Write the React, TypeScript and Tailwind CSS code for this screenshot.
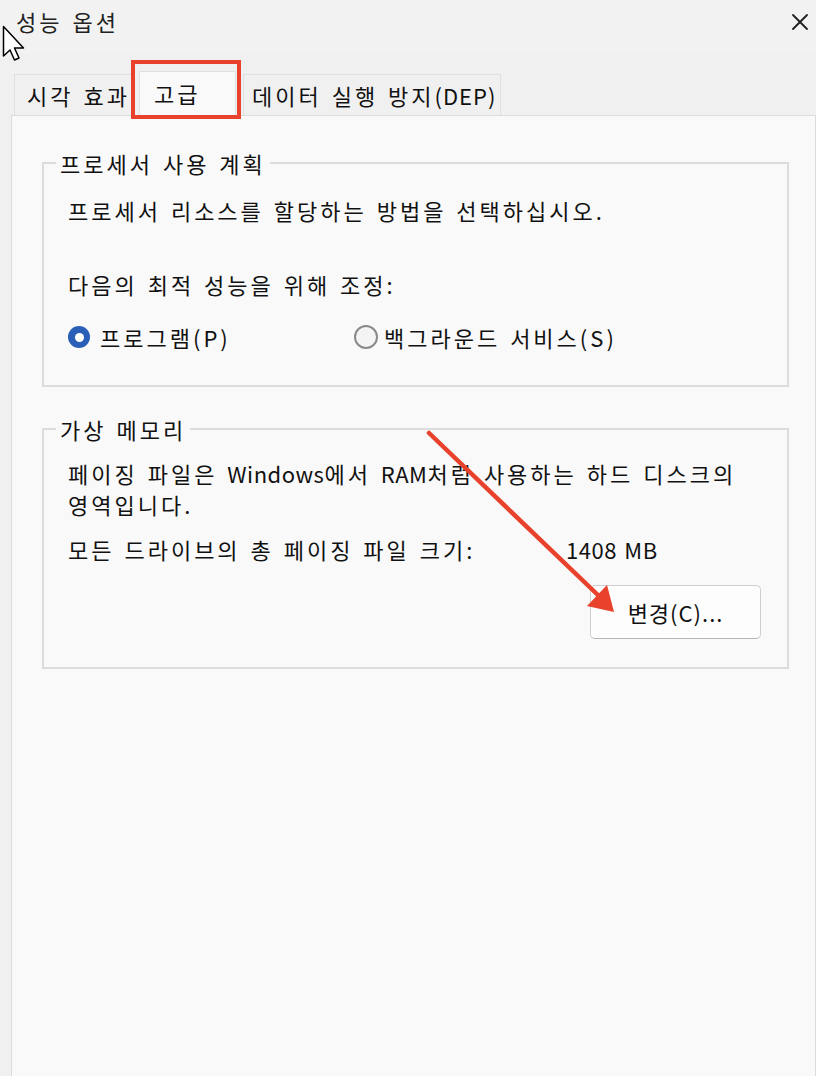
import { X } from 'lucide-react';

const font = { fontFamily: '"Noto Sans CJK KR", "Noto Sans", sans-serif' };

function Radio({ checked }: { checked?: boolean }) {
  if (checked) {
    return (
      <span className="w-[22px] h-[22px] rounded-full bg-[#2a5fb8] flex items-center justify-center shrink-0">
        <span className="w-[9px] h-[9px] rounded-full bg-white" />
      </span>
    );
  }
  return <span className="w-[24px] h-[24px] rounded-full border-2 border-[#8a8a8a] bg-[#f4f4f4] shrink-0" />;
}

function GroupBox({ title, className, children }: { title: string; className?: string; children: React.ReactNode }) {
  return (
    <fieldset className={`border-2 border-[#dcdcdc] px-[24px] ${className ?? ''}`}>
      <legend className="px-[4px] ml-[-12px] leading-[28px]">{title}</legend>
      {children}
    </fieldset>
  );
}

export default function App() {
  return (
    <div
      className="relative w-[816px] h-[1076px] overflow-hidden bg-[#f0f0f0] text-[#111] text-[22px] tracking-[3px] [word-spacing:2px]"
      style={font}
    >
      {/* Title bar */}
      <div className="h-[54px] flex items-start justify-between bg-[#f2f2f2] pl-[16px] pr-[2px]">
        <span className="leading-[24px] mt-[9px] text-[#222]">성능 옵션</span>
        <X size={28} strokeWidth={1.6} className="mt-[8px] text-[#222]" />
      </div>

      {/* Tabs */}
      <div className="flex items-end h-[61px] pl-[14px]">
        <div className="h-[41px] w-[120px] pl-[12px] border border-b-0 border-[#e0e0e0] bg-[#f0f0f0] flex items-center whitespace-nowrap">
          시각 효과
        </div>
        <div className="relative h-[44px] w-[97px] ml-[5px] border border-b-0 border-[#e0e0e0] bg-[#f9f9f9] flex items-center pl-[14px] z-10">
          고급
          <div className="absolute left-[-9px] top-[-12px] w-[110px] h-[59px] border-[4px] border-[#e8412c]" />
        </div>
        <div className="h-[41px] w-[258px] ml-[7px] pl-[8px] border border-b-0 border-[#e0e0e0] bg-[#f0f0f0] flex items-center whitespace-nowrap">
          데이터 실행 방지<span className="tracking-[1px]">(DEP)</span>
        </div>
      </div>

      {/* Panel */}
      <div className="ml-[11px] h-[970px] border border-[#dcdcdc] bg-[#f9f9f9] pt-[33px] pl-[30px] pr-[26px]">
        <GroupBox title="프로세서 사용 계획" className="h-[238px]">
          <p className="mt-[18px] leading-[30px]">프로세서 리소스를 할당하는 방법을 선택하십시오.</p>
          <p className="mt-[44px] leading-[30px]">다음의 최적 성능을 위해 조정:</p>
          <div className="flex items-center mt-[23px] leading-[30px]">
            <div className="flex items-center gap-[10px] w-[286px]">
              <Radio checked />
              <span>프로그램(P)</span>
            </div>
            <div className="flex items-center gap-[6px]">
              <Radio />
              <span>백그라운드 서비스(S)</span>
            </div>
          </div>
        </GroupBox>

        <GroupBox title="가상 메모리" className="h-[254px] mt-[28px]">
          <p className="mt-[15px] leading-[31px]">
            페이징 파일은 <span className="tracking-[0.5px]">Windows</span>에서 <span className="tracking-[0.5px]">RAM</span>처럼 사용하는 하드 디스크의
            <br />
            영역입니다.
          </p>
          <div className="flex mt-[14px] leading-[30px]">
            <span className="w-[498px]">모든 드라이브의 총 페이징 파일 크기:</span>
            <span className="tracking-[0.5px]">1408 MB</span>
          </div>
          <div className="flex justify-end mt-[21px] pr-[2px]">
            <button className="w-[171px] h-[54px] rounded-[5px] border border-[#cfcfcf] border-b-[#b5b5b5] bg-[#fdfdfd] tracking-[1px]">
              변경(C)...
            </button>
          </div>
        </GroupBox>
      </div>

      {/* Red annotation arrow */}
      <svg className="absolute left-0 top-0 pointer-events-none" width="816" height="1076">
        <line x1="429" y1="433" x2="600" y2="597" stroke="#e8412c" strokeWidth="4.5" strokeLinecap="round" />
        <polygon points="614,612 587,606 607,585" fill="#e8412c" />
      </svg>

      {/* Mouse cursor */}
      <svg className="absolute left-[2px] top-[25px]" width="26" height="38" viewBox="0 0 26 38">
        <path d="M1.5 1.5 L1.5 31 L8 25 L12.5 35 L17 33 L12.5 23 L21.5 23 Z" fill="#fff" stroke="#000" strokeWidth="1.5" strokeLinejoin="round" />
      </svg>
    </div>
  );
}
